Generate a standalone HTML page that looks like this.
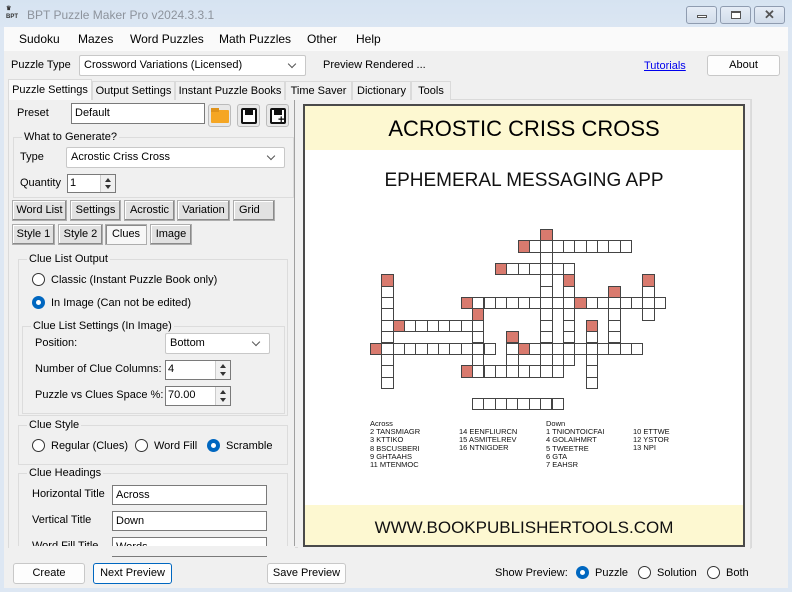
<!DOCTYPE html>
<html><head><meta charset="utf-8">
<style>
*{box-sizing:border-box;margin:0;padding:0}
body{width:792px;height:592px;overflow:hidden;background:#dde7f3;font-family:"Liberation Sans",sans-serif;font-size:11px;color:#000;position:relative}
.a{position:absolute;white-space:nowrap}
.t{position:absolute;white-space:nowrap;line-height:14px}
.btn{position:absolute;background:#fdfdfd;border:1px solid #c8c8c8;border-radius:3px;text-align:center;line-height:18px;white-space:nowrap}
.wb{position:absolute;background:#e1e1e1;border:1px solid #adadad;box-shadow:inset -1px -1px #8a8a8a,inset 1px 1px #fff;text-align:center;line-height:18px;white-space:nowrap}
.tb{position:absolute;background:#fff;border:1px solid #7a7a7a;padding-left:3px;line-height:18px;white-space:nowrap}
.cb{position:absolute;background:#fff;border:1px solid #c8c8c8;border-radius:2px;padding-left:4px;line-height:18px;white-space:nowrap}
.cb:after{content:"";position:absolute;right:10px;top:5px;width:5px;height:5px;border-right:1px solid #555;border-bottom:1px solid #555;transform:rotate(45deg)}
.sp{position:absolute;background:#fff;border:1px solid #7a7a7a;padding-left:2px;line-height:17px}
.sp i{position:absolute;right:0;top:0;width:15px;height:100%;background:#f0f0f0;border-left:1px solid #ccc}
.sp i:before{content:"";position:absolute;left:4px;top:3px;border:3px solid transparent;border-bottom:4px solid #333;border-top:0}
.sp i:after{content:"";position:absolute;left:4px;bottom:3px;border:3px solid transparent;border-top:4px solid #333;border-bottom:0}
.grp{position:absolute;border:1px solid #dcdcdc}
.grp>span{position:absolute;top:-8px;left:8px;background:#f0f0f0;padding:0 2px;line-height:14px;white-space:nowrap}
.r{position:absolute;width:13px;height:13px;border:1px solid #333;border-radius:50%;background:#fff}
.r.on{border:none;background:#0067c0}
.r.on:after{content:"";position:absolute;left:4px;top:4px;width:5px;height:5px;border-radius:50%;background:#fff}
.tab{position:absolute;top:81px;height:19px;border:1px solid #dadada;border-bottom:none;background:#f0f0f0;text-align:center;line-height:18px;white-space:nowrap;overflow:hidden}
.c{position:absolute;width:12.35px;height:12.35px;border:1px solid #444;background:#fff}
.c.n{background:#d97a6e}
.cl{position:absolute;font-size:7.5px;line-height:8.2px;white-space:pre;color:#111}
.m{position:absolute;white-space:nowrap;line-height:14px;font-size:12px}
</style></head><body>
<!-- title bar -->
<div class="a" style="left:0;top:0;width:792px;height:27px;background:linear-gradient(#d6e3f1,#dbe6f3)"></div>
<div class="a" style="left:6px;top:5px;width:15px;height:17px;font-size:6px;line-height:8px;font-weight:bold;color:#333">&#9819;<br>BPT</div>
<div class="t" style="left:27px;top:8px;color:#8d939c;font-size:12px">BPT Puzzle Maker Pro v2024.3.3.1</div>
<div class="a" style="left:686px;top:6px;width:31px;height:18px;border:1px solid #8f9cb0;border-radius:3px;background:linear-gradient(#e6edf6,#d1dcea)"><div class="a" style="left:10px;top:8px;width:10px;height:3px;border:1px solid #555;background:#fff"></div></div>
<div class="a" style="left:720px;top:6px;width:31px;height:18px;border:1px solid #8f9cb0;border-radius:3px;background:linear-gradient(#e6edf6,#d1dcea)"><div class="a" style="left:10px;top:4px;width:10px;height:8px;border:1px solid #555;border-top-width:2px;background:#fff"></div></div>
<div class="a" style="left:754px;top:6px;width:31px;height:18px;border:1px solid #8f9cb0;border-radius:3px;background:linear-gradient(#e6edf6,#d1dcea);text-align:center;font-size:13px;line-height:15px;color:#555;font-weight:bold">&#10005;</div>
<!-- menu -->
<div class="a" style="left:4px;top:27px;width:784px;height:24px;background:#fafafa"></div>
<div class="m" style="left:19px;top:32px">Sudoku</div>
<div class="m" style="left:78px;top:32px">Mazes</div>
<div class="m" style="left:130px;top:32px">Word Puzzles</div>
<div class="m" style="left:219px;top:32px">Math Puzzles</div>
<div class="m" style="left:307px;top:32px">Other</div>
<div class="m" style="left:356px;top:32px">Help</div>
<!-- client -->
<div class="a" style="left:4px;top:51px;width:784px;height:537px;background:#f0f0f0"></div>
<div class="t" style="left:11px;top:58px">Puzzle Type</div>
<div class="cb" style="left:79px;top:55px;width:227px;height:21px">Crossword Variations (Licensed)</div>
<div class="t" style="left:323px;top:58px">Preview Rendered ...</div>
<div class="t" style="left:644px;top:59px;color:#0000ee;text-decoration:underline">Tutorials</div>
<div class="btn" style="left:707px;top:55px;width:73px;height:21px">About</div>
<!-- tabs -->
<div class="a" style="left:8px;top:99px;width:744px;height:449px;border:1px solid #dadada;background:#f0f0f0"></div>
<div class="tab" style="left:8px;top:79px;width:84px;height:21px;background:#f9f9f9;line-height:20px">Puzzle Settings</div>
<div class="tab" style="left:92px;width:83px">Output Settings</div>
<div class="tab" style="left:175px;width:110px">Instant Puzzle Books</div>
<div class="tab" style="left:285px;width:67px">Time Saver</div>
<div class="tab" style="left:352px;width:59px">Dictionary</div>
<div class="tab" style="left:411px;width:40px">Tools</div>
<!-- left panel -->
<div class="a" style="left:294px;top:100px;width:1px;height:446px;background:#a0a0a0"></div>
<div class="t" style="left:17px;top:106px">Preset</div>
<div class="tb" style="left:71px;top:103px;width:134px;height:21px">Default</div>
<div class="a" style="left:208px;top:104px;width:23px;height:23px;border:1px solid #bbb;border-radius:3px;background:#e8e8e8"><div class="a" style="left:2px;top:5px;width:18px;height:13px;background:#f5a623;border-radius:1px"></div><div class="a" style="left:2px;top:3px;width:8px;height:4px;background:#e0931a"></div></div>
<div class="a" style="left:237px;top:104px;width:23px;height:23px;border:1px solid #bbb;border-radius:3px;background:#e8e8e8"><div class="a" style="left:3px;top:3px;width:16px;height:16px;border:2px solid #111;border-radius:2px;background:#fff"><div class="a" style="left:2px;top:0;width:8px;height:5px;background:#111"></div></div></div>
<div class="a" style="left:266px;top:104px;width:23px;height:23px;border:1px solid #bbb;border-radius:3px;background:#e8e8e8"><div class="a" style="left:3px;top:3px;width:16px;height:16px;border:2px solid #111;border-radius:2px;background:#fff"><div class="a" style="left:2px;top:0;width:8px;height:5px;background:#111"></div><div class="t" style="left:6px;top:3px;font-weight:bold;font-size:11px">+</div></div></div>
<div class="grp" style="left:13px;top:137px;width:281px;height:61px"><span>What to Generate?</span></div>
<div class="t" style="left:20px;top:150px">Type</div>
<div class="cb" style="left:66px;top:147px;width:219px;height:21px">Acrostic Criss Cross</div>
<div class="t" style="left:20px;top:176px">Quantity</div>
<div class="sp" style="left:67px;top:174px;width:49px;height:19px">1<i></i></div>
<div class="wb" style="left:12px;top:200px;width:55px;height:21px">Word List</div>
<div class="wb" style="left:70px;top:200px;width:51px;height:21px">Settings</div>
<div class="wb" style="left:124px;top:200px;width:51px;height:21px">Acrostic</div>
<div class="wb" style="left:177px;top:200px;width:53px;height:21px">Variation</div>
<div class="wb" style="left:233px;top:200px;width:42px;height:21px;text-align:left;padding-left:5px">Grid</div>
<div class="wb" style="left:12px;top:224px;width:43px;height:21px">Style 1</div>
<div class="wb" style="left:58px;top:224px;width:45px;height:21px">Style 2</div>
<div class="wb" style="left:105px;top:224px;width:42px;height:21px;background:#f7f7f7;box-shadow:inset 1px 1px #8a8a8a">Clues</div>
<div class="wb" style="left:150px;top:224px;width:42px;height:21px">Image</div>
<div class="grp" style="left:18px;top:259px;width:270px;height:157px"><span>Clue List Output</span></div>
<div class="r" style="left:32px;top:273px"></div><div class="t" style="left:51px;top:273px">Classic (Instant Puzzle Book only)</div>
<div class="r on" style="left:32px;top:296px"></div><div class="t" style="left:51px;top:296px">In Image (Can not be edited)</div>
<div class="grp" style="left:22px;top:326px;width:263px;height:88px"><span>Clue List Settings (In Image)</span></div>
<div class="t" style="left:35px;top:336px">Position:</div>
<div class="cb" style="left:165px;top:333px;width:105px;height:21px">Bottom</div>
<div class="t" style="left:35px;top:362px">Number of Clue Columns:</div>
<div class="sp" style="left:165px;top:360px;width:66px;height:20px">4<i></i></div>
<div class="t" style="left:35px;top:388px">Puzzle vs Clues Space %:</div>
<div class="sp" style="left:165px;top:386px;width:66px;height:20px">70.00<i></i></div>
<div class="grp" style="left:18px;top:425px;width:270px;height:40px"><span>Clue Style</span></div>
<div class="r" style="left:32px;top:439px"></div><div class="t" style="left:51px;top:439px">Regular (Clues)</div>
<div class="r" style="left:135px;top:439px"></div><div class="t" style="left:154px;top:439px">Word Fill</div>
<div class="r on" style="left:207px;top:439px"></div><div class="t" style="left:226px;top:439px">Scramble</div>
<div class="grp" style="left:18px;top:473px;width:270px;height:80px"><span>Clue Headings</span></div>
<div class="t" style="left:32px;top:487px">Horizontal Title</div>
<div class="tb" style="left:112px;top:485px;width:155px;height:20px">Across</div>
<div class="t" style="left:32px;top:513px">Vertical Title</div>
<div class="tb" style="left:112px;top:511px;width:155px;height:20px">Down</div>
<div class="t" style="left:32px;top:539px">Word Fill Title</div>
<div class="tb" style="left:112px;top:537px;width:155px;height:20px">Words</div>
<div class="a" style="left:9px;top:546px;width:286px;height:10px;background:#f0f0f0"></div>
<!-- preview -->
<div class="a" style="left:298px;top:100px;width:453px;height:449px;background:#f0f0f0;border-right:1px solid #ddd"></div>
<div class="a" style="left:303px;top:104px;width:442px;height:443px;border:2px solid #4a4a4a;background:#fff;overflow:hidden">
 <div class="a" style="left:0;top:0;width:438px;height:44px;background:#fdf8d1"></div>
 <div class="a" style="left:0;top:10px;width:438px;text-align:center;font-size:22px;line-height:26px">ACROSTIC CRISS CROSS</div>
 <div class="a" style="left:0;top:64px;width:438px;text-align:center;font-size:19px;line-height:22px;color:#111">EPHEMERAL MESSAGING APP</div>
 <div class="a" style="left:0;top:399px;width:438px;height:41px;background:#fdf8d1"></div>
 <div class="a" style="left:0;top:412px;width:438px;text-align:center;font-size:17px;line-height:20px;color:#111">WWW.BOOKPUBLISHERTOOLS.COM</div>
</div>
<div id="grid"></div>
<div class="cl" style="left:370px;top:420px">Across
2 TANSMIAGR
3 KTTIKO
8 BSCUSBERI
9 GHTAAHS
11 MTENMOC</div>
<div class="cl" style="left:459px;top:428px">14 EENFLIURCN
15 ASMITELREV
16 NTNIGDER</div>
<div class="cl" style="left:546px;top:420px">Down
1 TNIONTOICFAI
4 GOLAIHMRT
5 TWEETRE
6 GTA
7 EAHSR</div>
<div class="cl" style="left:633px;top:428px">10 ETTWE
12 YSTOR
13 NPI</div>
<!-- bottom -->
<div class="btn" style="left:13px;top:563px;width:72px;height:21px">Create</div>
<div class="btn" style="left:93px;top:563px;width:79px;height:21px;border-color:#0067c0">Next Preview</div>
<div class="btn" style="left:267px;top:563px;width:79px;height:21px">Save Preview</div>
<div class="t" style="left:495px;top:566px">Show Preview:</div>
<div class="r on" style="left:576px;top:566px"></div><div class="t" style="left:595px;top:566px">Puzzle</div>
<div class="r" style="left:638px;top:566px"></div><div class="t" style="left:657px;top:566px">Solution</div>
<div class="r" style="left:707px;top:566px"></div><div class="t" style="left:726px;top:566px">Both</div>
<script>
var s=11.35,x0=370,y0=229,h='';
var w=[[15,0,13,0],[13,1,10,1],[11,3,7,1],[1,4,10,0],[17,4,8,0],[24,4,4,0],[21,5,6,0],[8,6,10,1],[18,6,8,1],[9,7,6,0],[2,8,8,1],[19,8,6,0],[12,9,4,0],[0,10,11,1],[13,10,11,1],[8,12,9,1]];
var seen={},num={};
w.forEach(function(a){num[a[0]+','+a[1]]=1;for(var i=0;i<a[2];i++){var c=a[0]+(a[3]?i:0),r=a[1]+(a[3]?0:i);seen[c+','+r]=1;}});
for(var k in seen){var p=k.split(',');h+='<div class="c'+(num[k]?' n':'')+'" style="left:'+(x0+p[0]*s).toFixed(1)+'px;top:'+(y0+p[1]*s).toFixed(1)+'px"></div>';}
for(var i=0;i<8;i++)h+='<div class="c" style="left:'+(472+i*s).toFixed(1)+'px;top:398px"></div>';
document.getElementById('grid').innerHTML=h;
</script>
</body></html>
